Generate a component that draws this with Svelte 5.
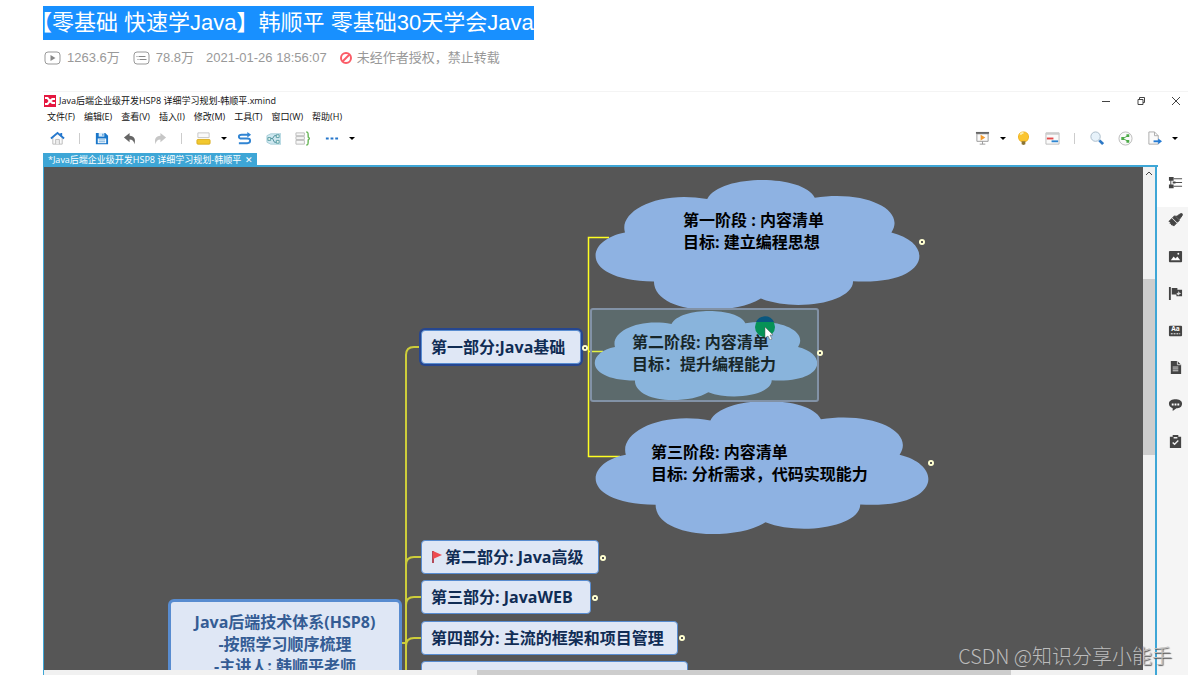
<script lang="ts">
  type IconName = string;

  const menus = ['文件(F)', '编辑(E)', '查看(V)', '插入(I)', '修改(M)', '工具(T)', '窗口(W)', '帮助(H)'];

  const leftTools: IconName[] = [
    'home', 'sep', 'save', 'undo', 'redo', 'sep', 'topic', 'caret',
    'relation', 'boundary', 'summary', 'more', 'caret',
  ];
  const rightTools: IconName[] = [
    'present', 'caret', 'idea', 'gantt', 'sep', 'search', 'share', 'export', 'caret',
  ];
  const panels: IconName[] = ['outline', 'format', 'image', 'marker', 'label', 'notes', 'comments', 'task'];

  // positions on the map canvas
  const topics = [
    { text: '第一部分:Java基础', x: 377, y: 163, w: 160, selected: true, flag: false },
    { text: '第二部分: Java高级', x: 377, y: 373, w: 178, selected: false, flag: true },
    { text: '第三部分: JavaWEB', x: 377, y: 413, w: 170, selected: false, flag: false },
    { text: '第四部分: 主流的框架和项目管理', x: 377, y: 454, w: 257, selected: false, flag: false },
    { text: '', x: 377, y: 494, w: 267, selected: false, flag: false },
  ];

  const clouds = [
    { lines: ['第一阶段 : 内容清单', '目标: 建立编程思想'], x: 549, y: 13, w: 326, h: 130, tx: 90, ty: 29 },
    { lines: ['第二阶段: 内容清单', '目标：提升编程能力'], x: 549, y: 144, w: 224, h: 89, tx: 39, ty: 20 },
    { lines: ['第三阶段: 内容清单', '目标: 分析需求，代码实现能力'], x: 549, y: 234, w: 335, h: 133, tx: 58, ty: 40 },
  ];

  const knobs = [
    [878, 75], [776, 186], [887, 296], [559, 391], [551, 431], [638, 471], [541, 181],
  ];
</script>

{#snippet icon(name: IconName)}
  <svg class="icon" viewBox="0 0 16 16" aria-hidden="true">
    {#if name === 'home'}
      <path d="M3 7v7h10V7L8 3z" fill="#fafafa" stroke="#bbb" />
      <path d="M6 14V9h4v5" fill="#eee" stroke="#bbb" />
      <path d="M1 8l7-6 7 6M12 2v3" fill="none" stroke="#2478cf" stroke-width="2" />
    {:else if name === 'save'}
      <path d="M2 2h10l3 3v9H2z" fill="#1976c9" />
      <path d="M5 2h6v4H5z" fill="#d9ecfa" />
      <path d="M9 3h1v2H9z" fill="#1976c9" />
      <path d="M4 8h9v5H4z" fill="#fff" />
      <path d="M5 9.500h7M5 11.500h7" stroke="#65a8dc" />
    {:else if name === 'undo'}
      <path d="M1 7l6-5v3c5 0 7 4 5 9 0-3-2-5-5-5v3z" fill="#666" />
    {:else if name === 'redo'}
      <path d="M15 7L9 2v3c-5 0-7 4-5 9 0-3 2-5 5-5v3z" fill="#c6c6c6" />
    {:else if name === 'topic'}
      <path d="M2 2h12v5H2z" fill="#fafafa" stroke="#c5c5c5" />
      <rect x="1" y="9" width="14" height="5" rx="1" fill="#f2c82e" stroke="#d9ad20" />
    {:else if name === 'relation'}
      <path d="M13 4H5C1 4 1 8 5 8h6c4 0 4 5 0 5H2" fill="none" stroke="#3185d3" stroke-width="2" />
      <path d="M11 1l4 3-4 3z" fill="#3185d3" />
    {:else if name === 'boundary'}
      <path d="M1 5l4-2h11v11H5l-4-2z" fill="#cfe8f0" stroke="#a6ced9" />
      <path d="M2 8h5M12 5H9L7 8l2 4h3" fill="none" stroke="#4b8b98" />
      <path d="M2 7h3v3H2zM11 4h3v3h-3zM11 10h3v3h-3z" fill="#e5f4ee" stroke="#5b9fa5" />
    {:else if name === 'summary'}
      <path d="M1 2h9v3H1zM1 6h9v3H1zM1 10h9v4H1z" fill="#f7f7f7" stroke="#bbb" />
      <path d="M12 1c2 0 2 1 2 3 0 3 0 3 2 4-2 1-2 1-2 4 0 2 0 3-2 3" fill="none" stroke="#67b557" stroke-width="1.500" />
    {:else if name === 'more'}
      <path d="M2 7h3v2H2zM7 7h3v2H7zM12 7h3v2h-3z" fill="#2576cb" />
    {:else if name === 'present'}
      <path d="M2 3h12v8H2zM8 11v3M5 14h6" fill="#fafafa" stroke="#999" />
      <path d="M1 2h14" stroke="#666" stroke-width="2" />
      <path d="M6 4l5 3-5 3z" fill="#f29a2e" />
    {:else if name === 'idea'}
      <path d="M5 11C1 8 2 1 8 1s7 7 3 10z" fill="#fbc52f" stroke="#eeb01e" />
      <path d="M5 4c0-1 1-2 3-2" fill="none" stroke="#fff0b0" stroke-width="2" />
      <path d="M6 11h4v3l-2 1-2-1z" fill="#8b7433" />
    {:else if name === 'gantt'}
      <path d="M1 2h14v12H1z" fill="#fafafa" stroke="#bbb" />
      <path d="M1 3h14" stroke="#ccc" stroke-width="2" />
      <path d="M2 8h7" stroke="#e54848" stroke-width="2" />
      <path d="M7 11h7" stroke="#2e86d1" stroke-width="2" />
    {:else if name === 'search'}
      <circle cx="7" cy="6" r="5" fill="#e7f2fa" stroke="#a9bac7" />
      <path d="M11 10l4 4" stroke="#2d78c5" stroke-width="3" />
    {:else if name === 'share'}
      <circle cx="8" cy="8" r="7" fill="#fafafa" stroke="#bbb" />
      <path d="M11 5L5 8l6 3" fill="none" stroke="#4dab48" />
      <path d="M9 3.500h3v3H9zM3.500 6.500h3v3h-3zM9 9.500h3v3H9z" fill="#4dab48" />
    {:else if name === 'export'}
      <path d="M2 1h6l4 4v9H2zM8 1v4h4" fill="#fafafa" stroke="#aaa" />
      <path d="M7 11h6" stroke="#247bd4" stroke-width="2" />
      <path d="M12 8l4 3-4 3z" fill="#247bd4" />
    {:else if name === 'outline'}
      <path d="M1 2h5v4H1zM1 10h5v4H1zM5 7h3v2H5z" fill="#444" />
      <path d="M6 4h9M7 8h8M6 12h9M3 5v7" stroke="#444" />
    {:else if name === 'format'}
      <path d="M8 4l4 4 3-4c1-2 0-3-2-2L10 4M7 4l5 5-2 2-5-5zM4 7l5 5-3 3-2-2v1l-1-2H2l1-1-2-1z" fill="#444" stroke="#444" />
      <path d="M4.500 6.500l5 5" stroke="#ccc" stroke-width=".6" />
    {:else if name === 'image'}
      <rect x="1" y="2" width="14" height="12" rx="1" fill="#444" />
      <path d="M3 12l3-4 2 2 2-2 3 4z" fill="#fff" />
      <circle cx="11" cy="5" r="1" fill="#fff" />
    {:else if name === 'marker'}
      <path d="M1 1h2v14H1zM4 2h6v2h5v7H9V9H4z" fill="#444" />
      <path d="M11 5l1 2 2 1-2 1-1 1-1-1-1-1 2-1z" fill="#ddd" />
    {:else if name === 'label'}
      <rect x="1" y="3" width="14" height="11" rx="1" fill="#444" />
      <text x="8" y="9" class="glyph">Aa</text>
      <path d="M3 11.500h10" stroke="#fff" stroke-dasharray="2 1" />
    {:else if name === 'notes'}
      <path d="M3 1h7l4 4v10H3z" fill="#444" />
      <path d="M5 7.500h6M5 9.500h6M5 11.500h6" stroke="#ddd" />
      <path d="M10 1v4h4" fill="none" stroke="#ddd" />
    {:else if name === 'comments'}
      <path d="M1 7c0-6 14-6 14 0 0 4-3 5-6 5l-4 3v-3c-3-1-4-3-4-5z" fill="#444" />
      <path d="M4 7h2v2H4zM7 7h2v2H7zM10 7h2v2h-2z" fill="#fff" />
    {:else if name === 'task'}
      <path d="M2 3h3V1h6v2h3v12H2z" fill="#444" />
      <path d="M5 9l2 2 4-4M6 4h4" fill="none" stroke="#eee" stroke-width="1.500" />
    {/if}
  </svg>
{/snippet}

{#snippet tool(name: IconName)}
  {#if name === 'sep'}
    <span class="sep"></span>
  {:else if name === 'caret'}
    <button class="caret" aria-label="caret"></button>
  {:else}
    <button class="tool" aria-label={name}>{@render icon(name)}</button>
  {/if}
{/snippet}

<main class="page">
  <header class="video-head">
    <h1>【零基础 快速学Java】韩顺平 零基础30天学会Java</h1>
    <div class="meta">
      <span class="stat">
        <svg class="stat-icon" viewBox="0 0 18 16" aria-hidden="true">
          <rect x="1.500" y="2" width="15" height="12" rx="3" fill="none" stroke="#999" />
          <path d="M7 5l5 3-5 3z" fill="#888" />
        </svg>
        1263.6万
      </span>
      <span class="stat">
        <svg class="stat-icon" viewBox="0 0 18 16" aria-hidden="true">
          <rect x="1.500" y="2" width="15" height="12" rx="3" fill="none" stroke="#999" />
          <path d="M4 6.500h1M6 6.500h7M5 9.500h1M7 9.500h7" stroke="#888" />
        </svg>
        78.8万
      </span>
      <time>2021-01-26 18:56:07</time>
      <span class="notice">
        <svg class="ban" viewBox="0 0 14 14" aria-hidden="true">
          <circle cx="7" cy="7" r="5" fill="none" stroke="#fb5c67" stroke-width="2" />
          <path d="M3.500 10.500l7-7" stroke="#fb5c67" stroke-width="2" />
        </svg>
        未经作者授权，禁止转载
      </span>
    </div>
  </header>

  <section class="window">
    <div class="titlebar">
      <svg class="logo" viewBox="0 0 12 12" aria-hidden="true">
        <path d="M0 0h12v12H0z" fill="#e5173f" />
        <path d="M1 2h3l2 2.500L8 3h3v2H9L7.500 6 9 7h2v2H8L6 7.500 4 10H1V8h2l1.500-2L3 4H1z" fill="#fff" />
      </svg>
      <span>Java后端企业级开发HSP8 详细学习规划-韩顺平.xmind</span>
      <div class="controls">
        <button aria-label="minimize"><svg viewBox="0 0 10 10"><path d="M1 5.500h8" /></svg></button>
        <button aria-label="restore"><svg viewBox="0 0 10 10"><path d="M2 3.500h5v5H2zM3.500 3V1.500h5v5H7" /></svg></button>
        <button aria-label="close"><svg viewBox="0 0 10 10"><path d="M1 1l8 8M9 1l-8 8" /></svg></button>
      </div>
    </div>

    <nav class="menubar">
      {#each menus as menu}
        <button>{menu}</button>
      {/each}
    </nav>

    <div class="toolbar">
      {#each leftTools as name}{@render tool(name)}{/each}
      <span class="spacer"></span>
      {#each rightTools as name}{@render tool(name)}{/each}
    </div>

    <div class="tabs">
      <button class="tab">*Java后端企业级开发HSP8 详细学习规划-韩顺平 <span class="tab-close">✕</span></button>
    </div>

    <div class="body">
      <div class="editor">
        <div class="view">
          <div class="canvas">
            <svg class="links" aria-hidden="true">
              <g class="main-links">
                <path d="M376 180h-6q-8 0-8 8v330M358 476h4" />
                <path d="M377 390h-7q-8 0-8 8M377 430h-7q-8 0-8 8M377 471h-7q-8 0-8 8" />
              </g>
              <path class="sub-links" d="M565 70.500H544.500v219H576M544 184.500h15" />
            </svg>

            <div class="root">
              Java后端技术体系(HSP8)<br />-按照学习顺序梳理<br />-主讲人: 韩顺平老师
            </div>

            {#each topics as t}
              <div class="topic" class:selected={t.selected} style="left: {t.x}px; top: {t.y}px; width: {t.w}px">
                {#if t.flag}
                  <svg class="flag" viewBox="0 0 12 14" aria-hidden="true">
                    <path d="M1 1h2v12H1z" fill="#b34a5a" />
                    <path d="M2 1l9 4-9 4z" fill="#ee4b50" />
                  </svg>
                {/if}{t.text}
              </div>
            {/each}

            {#each clouds as c}
              <div
                class="cloud"
                style="left: {c.x}px; top: {c.y}px; width: {c.w}px; height: {c.h}px; padding: {c.ty}px 0 0 {c.tx}px"
              >
                <svg viewBox="69 30 979 388" preserveAspectRatio="none" aria-hidden="true">
                  <path
                    d="M165 187C40 210 30 330 252 333C252 388 330 418 415 418C480 418 535 407 573 384C680 425 850 395 850 332C1080 345 1100 220 965 187C1010 120 890 60 735 83C700 12 450 12 412 87C270 60 145 120 165 187z"
                  />
                </svg>
                {#each c.lines as line}<p>{line}</p>{/each}
              </div>
            {/each}

            <div class="selection"></div>

            {#each knobs as [x, y]}
              <button class="knob" aria-label="fold" style="left: {x}px; top: {y}px"></button>
            {/each}

            <svg class="pointer" viewBox="0 0 22 24" aria-hidden="true">
              <circle cx="11" cy="11" r="10" fill="#079257" />
              <path d="M2 6a10 10 0 0 1 18 0z" fill="#09577f" />
              <path d="M11 11v11l3-2 2 4 2-1-2-4h3z" fill="#fff" stroke="#555" stroke-width=".5" />
            </svg>
          </div>

          <div class="vscroll">
            <svg class="arrow" viewBox="0 0 8 6" aria-hidden="true"><path d="M1 5l3-3 3 3" /></svg>
            <div class="vthumb"></div>
          </div>
        </div>
        <div class="hscroll"><div class="hthumb"></div></div>
      </div>

      <aside class="panel">
        {#each panels as name}
          <button class="panel-btn" aria-label={name}>{@render icon(name)}</button>
        {/each}
      </aside>
    </div>
  </section>

  <div class="watermark">CSDN @知识分享小能手</div>
</main>

<style>
  :global(body) {
    background: #fff;
  }

  .page {
    position: relative;
    display: flex;
    flex-direction: column;
    height: 100vh;
    overflow: hidden;
    font-family: 'Liberation Sans', 'Noto Sans CJK SC', sans-serif;
  }

  button {
    display: flex;
    align-items: center;
    justify-content: center;
    padding: 0;
    border: 0;
    background: none;
    color: inherit;
    font: inherit;
  }

  .video-head {
    padding: 6px 0 24px 43px;
  }

  h1 {
    width: fit-content;
    margin: 0;
    overflow: hidden;
    background: #1890ff;
    color: #fff;
    font-size: 22px;
    font-weight: 400;
    line-height: 34px;
    text-indent: -13px;
    white-space: nowrap;
  }

  .meta {
    display: flex;
    gap: 12px;
    margin-top: 9px;
    color: #999;
    font-size: 13px;
    line-height: 18px;
  }

  .stat,
  .notice {
    display: flex;
    align-items: center;
    gap: 5px;
  }

  .notice {
    gap: 4px;
  }

  .stat-icon {
    width: 19px;
    height: 16px;
  }

  .ban {
    width: 14px;
    height: 14px;
  }

  .window {
    display: flex;
    flex: 1;
    flex-direction: column;
    min-height: 0;
    margin-left: 43px;
    border-top: 1px solid #f4f4f4;
    font-family: 'Open Sans', 'Noto Sans CJK SC', sans-serif;
    font-size: 9px;
    color: #111;
  }

  .titlebar {
    display: flex;
    align-items: center;
    gap: 3px;
    height: 17px;
    padding: 0 7px 0 1px;
  }

  .logo {
    width: 12px;
    height: 12px;
  }

  .controls {
    display: flex;
    gap: 25px;
    margin-left: auto;
  }

  .controls svg {
    width: 10px;
    height: 10px;
    fill: none;
    stroke: #444;
  }

  .menubar {
    display: flex;
    gap: 9px;
    height: 15px;
    padding-left: 4px;
  }

  .toolbar {
    display: flex;
    align-items: center;
    height: 28px;
    padding: 0 7px 1px 0;
  }

  .tool {
    width: 29px;
    height: 24px;
  }

  .icon {
    width: 15px;
    height: 15px;
  }

  .sep {
    width: 1px;
    height: 11px;
    margin: 0 7px;
    background: #ccc;
  }

  .caret {
    width: 12px;
    height: 24px;
  }

  .caret::before {
    content: '';
    border: 3px solid transparent;
    border-top-color: #000;
    border-bottom: 0;
  }

  .spacer {
    flex: 1;
  }

  .tabs {
    display: flex;
    height: 12px;
    margin-right: 30px;
    border-bottom: 2px solid #3ea6d6;
  }

  .tab {
    gap: 4px;
    padding: 0 4px 0 5px;
    background: #3ea6d6;
    color: #fff;
  }

  .tab-close {
    font-size: 9px;
  }

  .body {
    display: flex;
    flex: 1;
    min-height: 0;
  }

  .editor {
    display: flex;
    flex: 1;
    flex-direction: column;
    min-width: 0;
    border-left: 1px solid #3ea6d6;
    border-right: 2px solid #3ea6d6;
  }

  .view {
    display: flex;
    flex: 1;
    min-height: 0;
  }

  .canvas {
    position: relative;
    flex: 1;
    overflow: hidden;
    background: #565656;
    font-size: 16px;
    font-weight: 700;
    line-height: 22px;
    white-space: nowrap;
  }

  .links {
    position: absolute;
    width: 100%;
    height: 100%;
    fill: none;
  }

  .main-links {
    stroke: #cdcd3a;
    stroke-width: 2;
  }

  .sub-links {
    stroke: #ffff22;
    stroke-width: 1.5;
  }

  .root {
    position: absolute;
    left: 124px;
    top: 432px;
    box-sizing: border-box;
    width: 234px;
    height: 120px;
    padding-top: 9px;
    border: 3px solid #588cd0;
    border-radius: 6px;
    background: #dfe7f5;
    color: #345c94;
    text-align: center;
  }

  .topic {
    position: absolute;
    display: flex;
    align-items: center;
    box-sizing: border-box;
    height: 34px;
    padding-left: 9px;
    border: 1px solid #588cd0;
    border-radius: 4px;
    background: #dfe7f5;
    color: #102c54;
  }

  .topic.selected {
    box-shadow: 0 0 0 2px #26468f;
  }

  .flag {
    width: 12px;
    height: 14px;
    margin-right: 2px;
  }

  .cloud {
    position: absolute;
    box-sizing: border-box;
    color: #000;
  }

  .cloud svg {
    position: absolute;
    inset: 0;
    width: 100%;
    height: 100%;
    overflow: visible;
    fill: #8eb2e2;
  }

  .cloud p {
    position: relative;
    margin: 0;
  }

  .selection {
    position: absolute;
    left: 546px;
    top: 141px;
    width: 225px;
    height: 90px;
    border: 2px solid #8292a6;
    border-radius: 3px;
    background: rgba(120, 190, 200, 0.2);
  }

  .knob {
    position: absolute;
    width: 6px;
    height: 6px;
    margin: -3px;
    border-radius: 50%;
    background: #ffffd0;
  }

  .knob::before {
    content: '';
    width: 2px;
    height: 2px;
    background: #555;
  }

  .pointer {
    position: absolute;
    left: 710px;
    top: 149px;
    width: 22px;
    height: 24px;
  }

  .vscroll {
    display: flex;
    flex-direction: column;
    align-items: center;
    width: 12px;
    background: #f1f1f1;
  }

  .arrow {
    width: 8px;
    height: 6px;
    margin-top: 3px;
    fill: none;
    stroke: #444;
  }

  .vthumb {
    width: 100%;
    height: 35%;
    margin-top: 103px;
    background: #cdcdcd;
  }

  .hscroll {
    height: 5px;
    background: #f1f1f1;
  }

  .hthumb {
    width: 48%;
    height: 100%;
    margin-left: 39%;
    background: #cdcdcd;
  }

  .panel {
    display: flex;
    flex-direction: column;
    width: 31px;
    background: linear-gradient(#fff 40px, #f5f5f5 40px);
  }

  .panel-btn {
    height: 37px;
    padding: 0 0 6px 6px;
  }

  .glyph {
    fill: #fff;
    font-size: 7px;
    font-weight: 700;
    text-anchor: middle;
  }

  .watermark {
    position: absolute;
    right: 16px;
    bottom: 5px;
    color: #bcbcbc;
    font-family: 'Noto Sans CJK SC', sans-serif;
    font-size: 20px;
    font-weight: 300;
    line-height: 28px;
    text-shadow: 1px 1px 1px #555;
  }
</style>
